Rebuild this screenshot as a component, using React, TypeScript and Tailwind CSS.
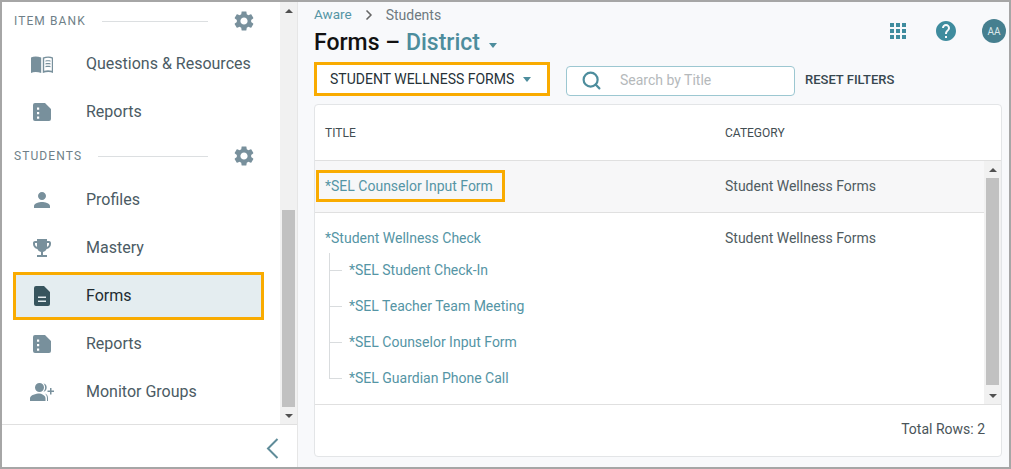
import { ChevronRight, Search } from 'lucide-react';

const gearPath =
  'M19.14 12.94c.04-.3.06-.61.06-.94 0-.32-.02-.64-.07-.94l2.03-1.58c.18-.14.23-.41.12-.61l-1.92-3.32c-.12-.22-.37-.29-.59-.22l-2.39.96c-.5-.38-1.03-.7-1.62-.94l-.36-2.54c-.04-.24-.24-.41-.48-.41h-3.84c-.24 0-.43.17-.47.41l-.36 2.54c-.59.24-1.13.57-1.62.94l-2.39-.96c-.22-.08-.47 0-.59.22L2.74 8.87c-.12.21-.08.47.12.61l2.03 1.58c-.05.3-.09.63-.09.94s.02.64.07.94l-2.03 1.58c-.18.14-.23.41-.12.61l1.92 3.32c.12.22.37.29.59.22l2.39-.96c.5.38 1.03.7 1.62.94l.36 2.54c.05.24.24.41.48.41h3.84c.24 0 .44-.17.47-.41l.36-2.54c.59-.24 1.13-.56 1.62-.94l2.39.96c.22.08.47 0 .59-.22l1.92-3.32c.12-.22.07-.47-.12-.61l-2.01-1.58zM12 15.6c-1.98 0-3.6-1.62-3.6-3.6s1.62-3.6 3.6-3.6 3.6 1.62 3.6 3.6-1.62 3.6-3.6 3.6z';

const icons = {
  book: 'M1 5.500C3.500 4 7.500 4 11.200 5.500V21C7.500 19.600 3.500 19.600 1 21zM12.800 5.500C16.500 4 20.500 4 23 5.500V21C20.500 19.600 16.500 19.600 12.800 21zM14.200 6.500V18.800C16.500 18 19.500 18 21.800 18.800V6.500C19.500 5.600 16.500 5.600 14.200 6.500zM15.500 8.500v1.200c1.700-.5 3.300-.5 5 0V8.500c-1.700-.5-3.300-.5-5 0zM15.500 11.300v1.200c1.700-.5 3.300-.5 5 0v-1.200c-1.700-.5-3.300-.5-5 0zM15.500 14.100v1.200c1.700-.5 3.300-.5 5 0v-1.200c-1.700-.5-3.300-.5-5 0z',
  report: 'M5 3h10l6 6v10a2 2 0 0 1-2 2H5a2 2 0 0 1-2-2V5a2 2 0 0 1 2-2zM7 7.500v2.200h2.200V7.500zM7 12v2.200h2.200V12zM7 16.500v2.200h2.200v-2.200z',
  person: 'M12 12c2.210 0 4-1.790 4-4s-1.790-4-4-4-4 1.790-4 4 1.790 4 4 4zm0 2c-2.670 0-8 1.340-8 4v2h16v-2c0-2.660-5.330-4-8-4z',
  trophy: 'M19 5h-2V3H7v2H5c-1.100 0-2 .9-2 2v1c0 2.550 1.920 4.630 4.390 4.940.63 1.500 1.980 2.630 3.610 2.960V19H7v2h10v-2h-4v-3.100c1.630-.33 2.980-1.460 3.610-2.960C19.080 12.630 21 10.550 21 8V7c0-1.100-.9-2-2-2zM5 8V7h2v3.820C5.840 10.400 5 9.300 5 8zm14 0c0 1.300-.84 2.400-2 2.820V7h2v1z',
  form: 'M6 2h8l6 6v12a2 2 0 0 1-2 2H6a2 2 0 0 1-2-2V4a2 2 0 0 1 2-2zM8 12.500V14h8v-1.500zM8 16.500V18h8v-1.500z',
  group: 'M9.500 12a4.500 4.500 0 1 0 0-9 4.500 4.500 0 0 0 0 9zM9.500 13.500C6.200 13.500 0 15.100 0 18.300V21h15.500v-2.700c0-1.800-1.300-3.100-3-3.800-.9-.6-2-1-3-1zM13.500 3.200a4.500 4.500 0 0 1 0 8.600c1-1.200 1.600-2.700 1.600-4.300s-.6-3.100-1.600-4.300zM15 13.600c2 .8 3 2.500 3 4.700V21h-1v-3c0-1.700-.8-3.300-2-4.400zM20 8v2.500h-2.500v1.500H20v2.500h1.500V12H24v-1.500h-2.500V8z',
};

function SideIcon({ d, className = 'text-[#78909c]' }: { d: string; className?: string }) {
  return (
    <svg viewBox="0 0 24 24" fill="currentColor" fillRule="evenodd" className={`h-6 w-6 ${className}`}>
      <path d={d} />
    </svg>
  );
}

function SectionHeading({ label, height }: { label: string; height: string }) {
  return (
    <div className={`flex items-center pl-3 pr-6 ${height}`}>
      <span className="text-xs tracking-[1.1px] text-[#6f7f88]">{label}</span>
      <div className="ml-4 mr-6 h-px flex-1 bg-[#dcdfe1]" />
      <svg viewBox="0 0 24 24" fill="currentColor" className="h-6 w-6 text-[#78909c]">
        <path d={gearPath} />
      </svg>
    </div>
  );
}

function NavItem({ icon, label, active }: { icon: string; label: string; active?: boolean }) {
  return (
    <div
      className={`ml-[11px] mr-4 flex h-12 items-center gap-[32px] text-base ${
        active ? 'border-[3px] border-[#f9ab00] bg-[#e4edf0] pl-[14px] text-[#212b30]' : 'pl-[17px] text-[#4b5b64]'
      }`}
    >
      <SideIcon d={icon} className={active ? 'text-[#37555e]' : 'text-[#78909c]'} />
      <span>{label}</span>
    </div>
  );
}

function Caret({ className = '' }: { className?: string }) {
  return <span className={`inline-block h-0 w-0 border-x-[4.5px] border-t-[5px] border-x-transparent border-t-[#4d8d9d] ${className}`} />;
}

function ScrollBar({ thumbClass }: { thumbClass: string }) {
  return (
    <div className="flex w-[17px] shrink-0 flex-col items-center bg-[#f1f1f1]">
      <div className="flex h-[17px] shrink-0 items-center justify-center">
        <span className="h-0 w-0 border-x-4 border-b-4 border-x-transparent border-b-[#505050]" />
      </div>
      <div className="w-full flex-1 px-0.5">
        <div className={`w-full bg-[#c1c1c1] ${thumbClass}`} />
      </div>
      <div className="flex h-[17px] shrink-0 items-center justify-center">
        <span className="h-0 w-0 border-x-4 border-t-4 border-x-transparent border-t-[#505050]" />
      </div>
    </div>
  );
}

const children = ['*SEL Student Check-In', '*SEL Teacher Team Meeting', '*SEL Counselor Input Form', '*SEL Guardian Phone Call'];

export default function App() {
  return (
    <div className="flex h-[469px] w-[1011px] overflow-hidden border-2 border-[#a6a6a6] font-['Roboto',sans-serif]">
      {/* Sidebar */}
      <aside className="flex w-[296px] shrink-0 flex-col border-r border-[#e6e6e6] bg-white">
        <div className="flex min-h-0 flex-1">
          <div className="flex-1 overflow-hidden">
            <SectionHeading label="ITEM BANK" height="h-[38px]" />
            <NavItem icon={icons.book} label="Questions & Resources" />
            <NavItem icon={icons.report} label="Reports" />
            <SectionHeading label="STUDENTS" height="h-10" />
            <NavItem icon={icons.person} label="Profiles" />
            <NavItem icon={icons.trophy} label="Mastery" />
            <NavItem icon={icons.form} label="Forms" active />
            <NavItem icon={icons.report} label="Reports" />
            <NavItem icon={icons.group} label="Monitor Groups" />
          </div>
          <ScrollBar thumbClass="mt-[191px] h-[197px]" />
        </div>
        <div className="flex h-[43px] shrink-0 items-center justify-end border-t border-[#e0e0e0] pr-[18px] pt-1">
          <svg viewBox="0 0 13 21" fill="none" stroke="currentColor" strokeWidth="2" className="h-[21px] w-[13px] text-[#5f8c99]">
            <path d="M11.500 1 2 10.500 11.500 20" />
          </svg>
        </div>
      </aside>

      {/* Main */}
      <main className="flex min-w-0 flex-1 flex-col bg-[#f8f9fb] pl-4 pr-[7px]">
        <div className="flex h-[60px] shrink-0 justify-between">
          <div>
            <div className="mt-[5px] flex h-[15px] items-center text-sm leading-none">
              <span className="text-[13.5px] text-[#5595a5]">Aware</span>
              <ChevronRight className="mx-[9px] h-4 w-4 text-[#666]" strokeWidth={2.5} />
              <span className="text-[#6e7a80]">Students</span>
            </div>
            <div className="mt-[7px] flex items-center text-[23px] font-medium leading-7 text-[#111]">
              Forms – <span className="ml-[6px] text-[#4d8d9d]">District</span>
              <Caret className="ml-[9px] mt-1" />
            </div>
          </div>
          <div className="mr-[-4px] mt-[17px] flex h-6 items-center">
            <div className="grid grid-cols-3 gap-[2px]">
              {Array.from({ length: 9 }).map((_, i) => (
                <span key={i} className="h-1 w-1 bg-[#3f8c9e]" />
              ))}
            </div>
            <svg viewBox="0 0 24 24" fill="currentColor" className="ml-7 h-6 w-6 text-[#3f8c9e]">
              <path d="M12 2C6.480 2 2 6.480 2 12s4.480 10 10 10 10-4.480 10-10S17.520 2 12 2zm1 17h-2v-2h2v2zm2.070-7.750l-.9.920C13.450 12.900 13 13.500 13 15h-2v-.5c0-1.100.45-2.100 1.170-2.830l1.240-1.260c.37-.36.59-.86.59-1.410 0-1.100-.9-2-2-2s-2 .9-2 2H8c0-2.210 1.790-4 4-4s4 1.790 4 4c0 .88-.36 1.680-.93 2.250z" />
            </svg>
            <div className="ml-6 flex h-6 w-6 items-center justify-center rounded-full bg-[#467f8f] text-[10px] text-[#dbe7ea]">AA</div>
          </div>
        </div>

        {/* Filters */}
        <div className="flex h-[42px] shrink-0 items-start">
          <div className="flex h-[34px] w-[236px] items-center border-[3px] border-[#f9ab00] bg-white pl-[13px] text-sm text-[#263238]">
            STUDENT WELLNESS FORMS
            <Caret className="ml-[9px]" />
          </div>
          <div className="ml-4 mt-1 flex h-[30px] w-[229px] items-center rounded border border-[#9cc7d1] bg-white pb-0.5 pl-[14px] text-sm text-[#b5b9bb]">
            <Search className="h-[21px] w-[21px] text-[#4d8d9d]" strokeWidth={2.5} />
            <span className="ml-[18px]">Search by Title</span>
          </div>
          <span className="ml-2.5 mt-2.5 text-[13px] font-medium leading-4 text-[#37474f]">RESET FILTERS</span>
        </div>

        {/* Table */}
        <section className="mb-2.5 flex min-h-0 flex-1 flex-col overflow-hidden rounded border border-[#e3e5e7] bg-white">
          <div className="flex h-[56px] shrink-0 items-center border-b border-[#e0e0e0] text-xs text-[#424d52]">
            <span className="w-[410px] pl-2.5">TITLE</span>
            <span>CATEGORY</span>
          </div>
          <div className="flex min-h-0 flex-1 border-b border-[#e0e0e0]">
            <div className="flex-1 text-sm">
              <div className="flex h-[52px] items-center border-b border-[#e0e0e0] bg-[#f7f7f8] pb-0.5">
                <div className="w-[410px] pl-px">
                  <span className="inline-block h-8 border-[3px] border-[#f9ab00] pl-1.5 pr-[9px] leading-[26px] text-[#5595a5]">*SEL Counselor Input Form</span>
                </div>
                <span className="text-[#4f5b61]">Student Wellness Forms</span>
              </div>
              <div className="flex h-10 items-start pt-[15px]">
                <span className="w-[410px] pl-2.5 text-[#5595a5]">*Student Wellness Check</span>
                <span className="text-[#4f5b61]">Student Wellness Forms</span>
              </div>
              <div className="ml-[14px]">
                {children.map((name, i) => (
                  <div key={name} className="flex h-9">
                    <div className="flex w-[13px] flex-col">
                      <div className="h-[18px] border-b border-l border-[#d9dcde]" />
                      {i < children.length - 1 && <div className="flex-1 border-l border-[#d9dcde]" />}
                    </div>
                    <span className="mb-0.5 ml-[7px] self-center text-[#5595a5]">{name}</span>
                  </div>
                ))}
              </div>
            </div>
            <ScrollBar thumbClass="h-[207px]" />
          </div>
          <div className="flex h-[51px] shrink-0 items-center justify-end pb-1 pr-4 text-sm text-[#4a5459]">Total Rows: 2</div>
        </section>
      </main>
    </div>
  );
}
